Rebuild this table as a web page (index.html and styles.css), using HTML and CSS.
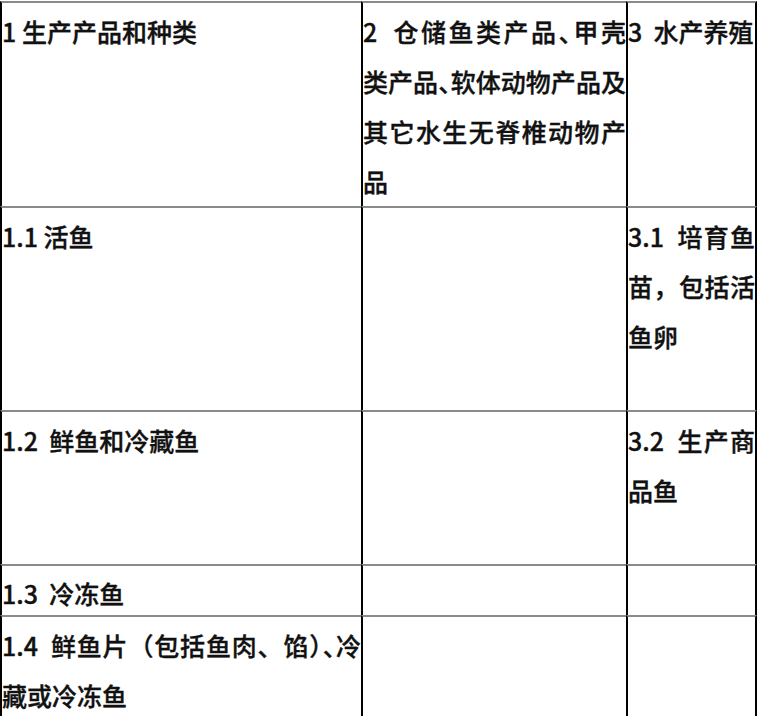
FILE: index.html
```html
<!DOCTYPE html>
<html lang="zh-CN">
<head>
<meta charset="utf-8">
<title>水产品分类表</title>
<link rel="stylesheet" href="styles.css">
</head>
<body>
<table class="grid">
  <colgroup>
    <col class="c1">
    <col class="c2">
    <col class="c3">
  </colgroup>
  <tr class="r1">
    <td>1 生产产品和种类</td>
    <td class="lines">2&nbsp; 仓储鱼类产品<span class="half">、</span>甲壳<br>类产品<span class="half">、</span>软体动物产品及<br>其它水生无脊椎动物产<br>品</td>
    <td>3&nbsp; 水产养殖</td>
  </tr>
  <tr class="r2">
    <td>1.1 活鱼</td>
    <td></td>
    <td>3.1&nbsp; 培育鱼苗，包括活鱼卵</td>
  </tr>
  <tr class="r3">
    <td>1.2&nbsp; 鲜鱼和冷藏鱼</td>
    <td></td>
    <td>3.2&nbsp; 生产商品鱼</td>
  </tr>
  <tr class="r4">
    <td>1.3&nbsp; 冷冻鱼</td>
    <td></td>
    <td></td>
  </tr>
  <tr class="r5">
    <td>1.4&nbsp; 鲜鱼片（包括鱼肉、馅<span class="half">）、</span>冷藏或冷冻鱼</td>
    <td></td>
    <td></td>
  </tr>
</table>
</body>
</html>
```

FILE: styles.css
```css
html, body {
  margin: 0;
  padding: 0;
  background: #ffffff;
}

body {
  padding-top: 1px;
  font-family: "Noto Sans CJK SC", "Noto Sans", sans-serif;
  font-size: 25px;
  line-height: 50px;
  color: #111111;
  overflow: hidden;
}

.grid {
  border-collapse: separate;
  border-spacing: 0;
  table-layout: fixed;
  width: 757px;
}

.c1 { width: 361px; }
.c2 { width: 265px; }
.c3 { width: 131px; }

.grid td {
  vertical-align: top;
  padding: 3px 0 0 0;
  border-top: 2px solid #8a8a8a;
  border-left: 2px solid #000000;
  text-align: justify;
  font-weight: 500;
  -webkit-text-stroke: 0.35px #111111;
}

.grid td:last-child {
  border-right: 2px solid #000000;
}

.grid td.lines {
  white-space: nowrap;
  text-align-last: justify;
}

.half {
  font-feature-settings: "halt" 1;
}

.r1 { height: 204px; }
.r2 { height: 204px; }
.r3 { height: 154px; }
.r4 { height: 51px; }
.r5 { height: 110px; }

.r4 td {
  padding-top: 5px;
  line-height: 44px;
}
```
